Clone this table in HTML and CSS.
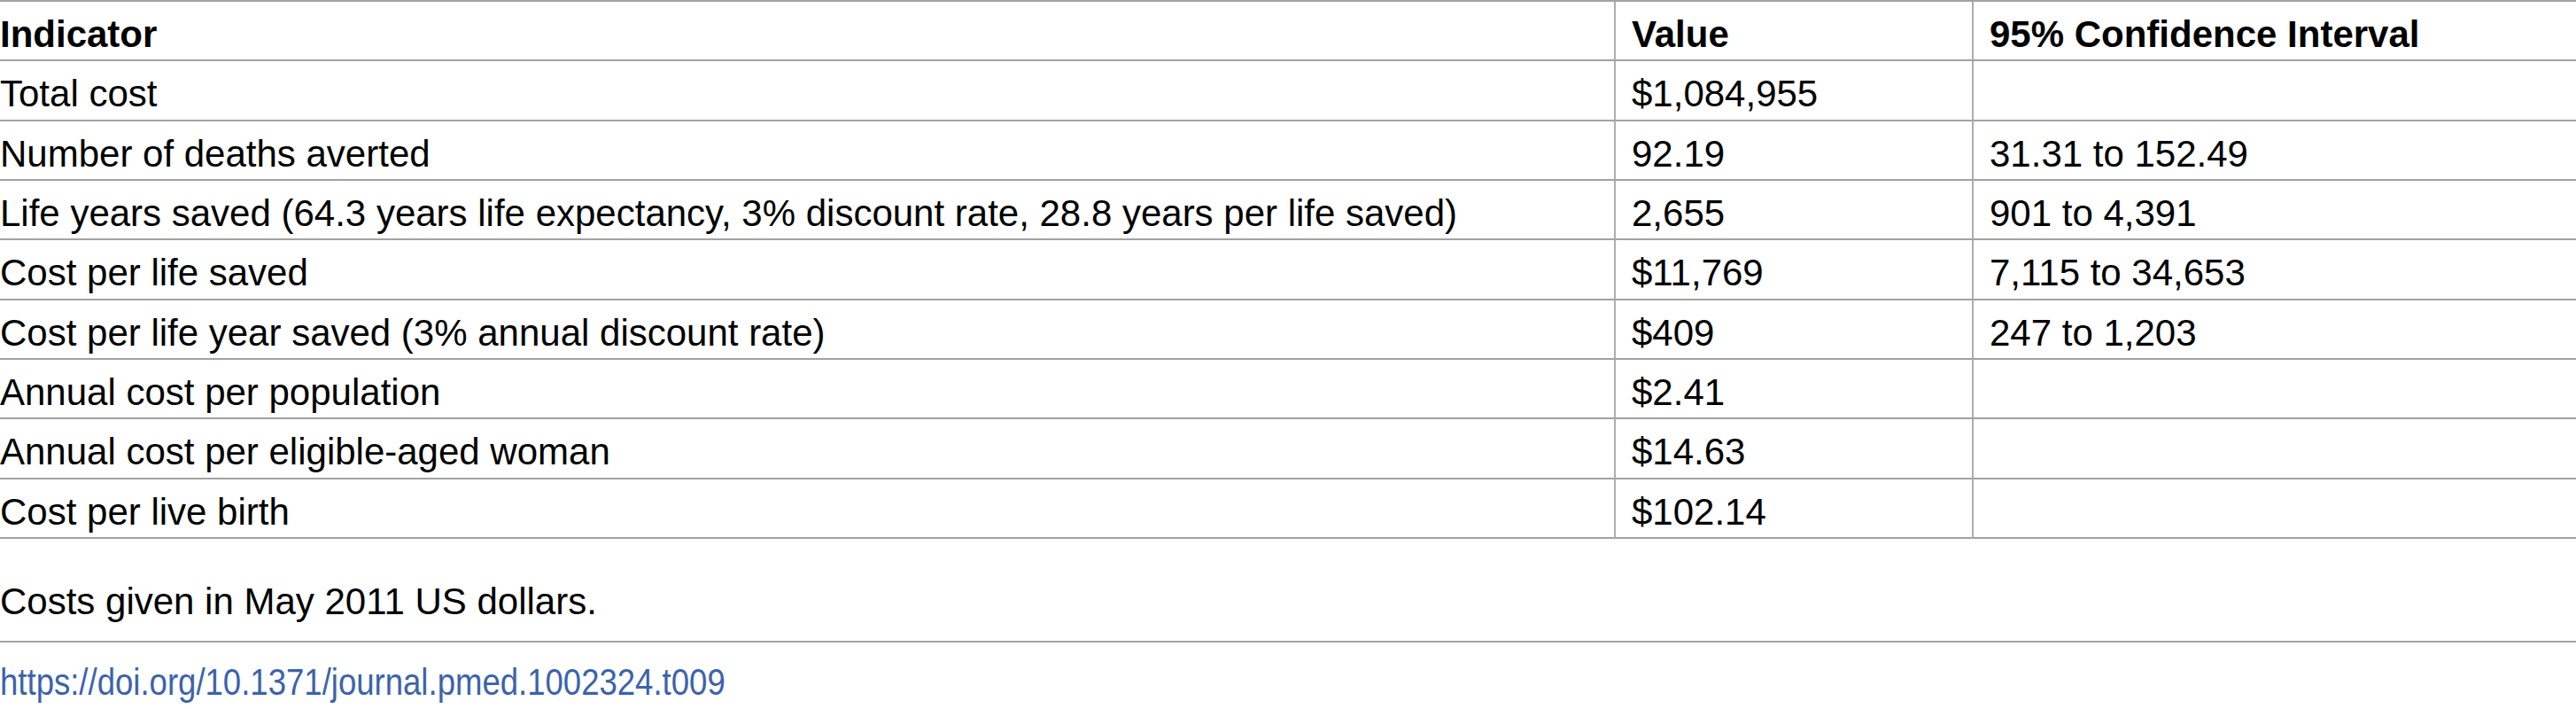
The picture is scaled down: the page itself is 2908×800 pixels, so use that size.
FILE: index.html
```html
<!DOCTYPE html>
<html lang="en">
<head>
<meta charset="utf-8">
<title>Table 9</title>
<link rel="stylesheet" href="styles.css">
</head>
<body>
<table class="data">
  <colgroup>
    <col class="c-ind">
    <col class="c-val">
    <col class="c-ci">
  </colgroup>
  <thead>
    <tr><th>Indicator</th><th>Value</th><th>95% Confidence Interval</th></tr>
  </thead>
  <tbody>
    <tr><td>Total cost</td><td>$1,084,955</td><td></td></tr>
    <tr><td>Number of deaths averted</td><td>92.19</td><td>31.31 to 152.49</td></tr>
    <tr><td>Life years saved (64.3 years life expectancy, 3% discount rate, 28.8 years per life saved)</td><td>2,655</td><td>901 to 4,391</td></tr>
    <tr><td>Cost per life saved</td><td>$11,769</td><td>7,115 to 34,653</td></tr>
    <tr><td>Cost per life year saved (3% annual discount rate)</td><td>$409</td><td>247 to 1,203</td></tr>
    <tr><td>Annual cost per population</td><td>$2.41</td><td></td></tr>
    <tr><td>Annual cost per eligible-aged woman</td><td>$14.63</td><td></td></tr>
    <tr><td>Cost per live birth</td><td>$102.14</td><td></td></tr>
  </tbody>
</table>
<p class="note">Costs given in May 2011 US dollars.</p>
<div class="doi-row"><a class="doi" href="#">https://doi.org/10.1371/journal.pmed.1002324.t009</a></div>
</body>
</html>
```

FILE: styles.css
```css
html, body {
  margin: 0;
  padding: 0;
  background: #ffffff;
}

body {
  width: 2908px;
  font-family: "Liberation Sans", Arial, Helvetica, sans-serif;
  font-size: 42px;
  color: #000000;
  overflow: hidden;
}

.data {
  width: 2908px;
  table-layout: fixed;
  border-collapse: separate;
  border-spacing: 0;
  border-top: 2px solid #a2a2a2;
}

.c-ind { width: 1822px; }
.c-val { width: 404px; }
.c-ci  { width: 682px; }

.data th,
.data td {
  box-sizing: border-box;
  height: 67.33px;
  padding: 13px 18px 0 18px;
  line-height: 48px;
  vertical-align: top;
  text-align: left;
  white-space: nowrap;
  border-bottom: 2px solid #a2a2a2;
}

.data th {
  font-weight: bold;
}

.data th:first-child,
.data td:first-child {
  padding-left: 0;
}

.data th + th,
.data td + td {
  border-left: 2px solid #adadad;
}

.note {
  margin: 0;
  padding: 47px 0 20px 0;
  line-height: 48px;
  border-bottom: 2px solid #a2a2a2;
}

.doi-row {
  padding-top: 21px;
  line-height: 48px;
}

.doi {
  display: inline-block;
  color: #3b63ad;
  text-decoration: none;
  transform: scaleX(0.87);
  transform-origin: left center;
}
```
